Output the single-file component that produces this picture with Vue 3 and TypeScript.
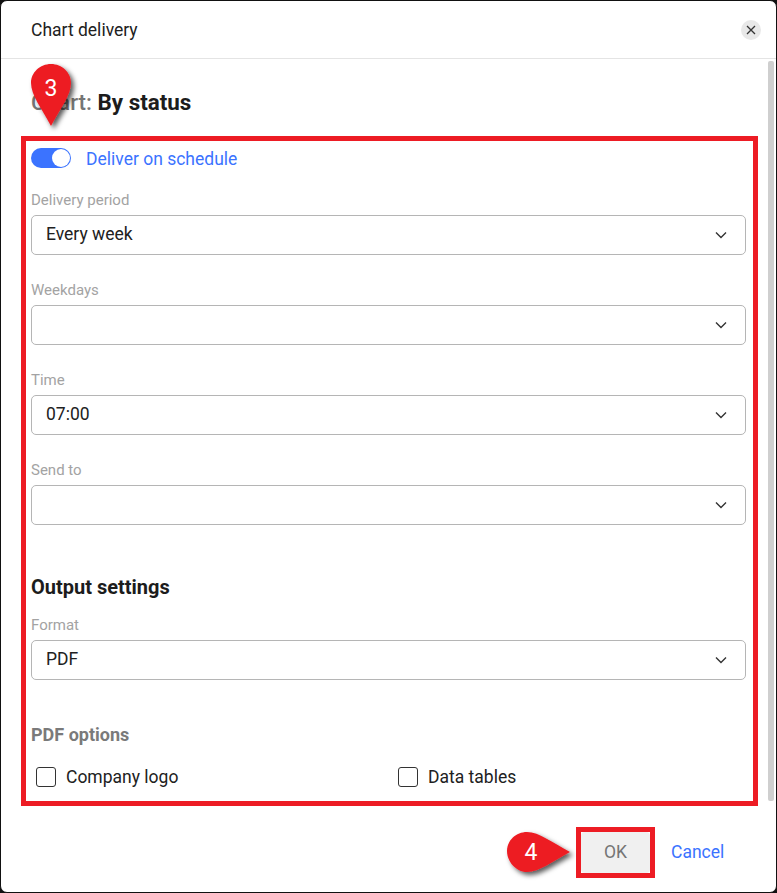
<script setup lang="ts">
  // チャート配信ダイアログ
  interface Field {
    label: string;
    value: string;
  }

  const scheduleFields: Field[] = [
    { label: 'Delivery period', value: 'Every week' },
    { label: 'Weekdays', value: '' },
    { label: 'Time', value: '07:00' },
    { label: 'Send to', value: '' },
  ];
</script>

<template>
  <div class="dialog">
    <header class="dialog-header">
      <span class="dialog-title">Chart delivery</span>
      <button class="close-button" aria-label="Close">
        <svg width="10" height="10" viewBox="0 0 10 10">
          <path d="M1 1 L9 9 M9 1 L1 9" stroke="#333" stroke-width="1.3" fill="none" />
        </svg>
      </button>
    </header>

    <div class="dialog-body">
      <div class="scroll-content">
        <h2 class="chart-name"><span class="chart-prefix">Chart:</span> By status</h2>

        <!-- 赤枠で囲まれたフォーム -->
        <section class="form-box">
          <div class="toggle-row">
            <span class="toggle"><span class="toggle-knob"></span></span>
            <span class="toggle-label">Deliver on schedule</span>
          </div>

          <div v-for="field in scheduleFields" :key="field.label" class="field">
            <label class="field-label">{{ field.label }}</label>
            <div class="select">
              <span>{{ field.value }}</span>
              <svg class="chevron" width="12" height="8" viewBox="0 0 12 8">
                <path d="M1 1.5 L6 6.5 L11 1.5" stroke="#333" stroke-width="1.4" fill="none" />
              </svg>
            </div>
          </div>

          <h3 class="section-title">Output settings</h3>

          <div class="field field-format">
            <label class="field-label">Format</label>
            <div class="select">
              <span>PDF</span>
              <svg class="chevron" width="12" height="8" viewBox="0 0 12 8">
                <path d="M1 1.5 L6 6.5 L11 1.5" stroke="#333" stroke-width="1.4" fill="none" />
              </svg>
            </div>
          </div>

          <h4 class="options-title">PDF options</h4>
          <div class="options">
            <label class="check"><span class="check-box"></span>Company logo</label>
            <label class="check"><span class="check-box"></span>Data tables</label>
          </div>
        </section>
      </div>
      <div class="scrollbar"></div>
    </div>

    <footer class="dialog-footer">
      <div class="ok-frame"><button class="ok-button">OK</button></div>
      <a class="cancel-link">Cancel</a>
    </footer>

    <!-- 注釈マーカー -->
    <svg class="pin pin-3" width="56" height="80" viewBox="0 0 56 80">
      <defs>
        <filter id="pinShadow" x="-30%" y="-30%" width="170%" height="170%">
          <feDropShadow dx="3" dy="3" stdDeviation="2.5" flood-color="#000" flood-opacity="0.65" />
        </filter>
      </defs>
      <path d="M21 2 C10 2 1 10.500 1 21 C1 33 12 47 21 64 C30 47 41 33 41 21 C41 10.500 32 2 21 2 Z" fill="#ed1c24" filter="url(#pinShadow)" />
      <text x="21" y="34" class="pin-number" text-anchor="middle">3</text>
    </svg>
    <svg class="pin pin-4" width="80" height="56" viewBox="0 0 80 56">
      <path d="M21 2 C10 2 1 10.500 1 21 C1 31.500 10 42 21 42 C33 42 47 31 64 22 C47 13 33 2 21 2 Z" fill="#ed1c24" filter="url(#pinShadow)" />
      <text x="25" y="30" class="pin-number" text-anchor="middle">4</text>
    </svg>
  </div>
</template>

<style>
body {
  background: #111;
}
</style>

<style scoped>
.dialog {
  position: relative;
  box-sizing: border-box;
  display: flex;
  flex-direction: column;
  width: 777px;
  height: 893px;
  background: #fff;
  border: 1px solid #111;
  border-radius: 7px;
  font-family: Roboto, "Liberation Sans", sans-serif;
  color: #212121;
  overflow: hidden;
}

.dialog-header {
  display: flex;
  align-items: center;
  justify-content: space-between;
  height: 57px;
  padding: 0 15px 0 30px;
  border-bottom: 1px solid #e4e4e4;
  flex-shrink: 0;
}

.dialog-title {
  font-size: 17.5px;
}

.close-button {
  display: flex;
  align-items: center;
  justify-content: center;
  width: 20px;
  height: 20px;
  padding: 0;
  border: none;
  border-radius: 50%;
  background: #e8e8e8;
}

.dialog-body {
  display: flex;
  flex: 1;
  min-height: 0;
}

.scroll-content {
  flex: 1;
  padding: 30px 10px 0 20px;
}

.chart-name {
  margin: 0 0 19px 10px;
  height: 28px;
  font-size: 22.4px;
  line-height: 26px;
  font-weight: 700;
  color: #1c1c1c;
}

.chart-prefix {
  color: #757575;
  font-weight: 500;
}

.form-box {
  box-sizing: border-box;
  height: 670px;
  border: 5px solid #ed1c24;
  padding: 7px 7px 0 5px;
}

.toggle-row {
  display: flex;
  align-items: center;
  gap: 15px;
  height: 20px;
}

.toggle {
  display: flex;
  justify-content: flex-end;
  align-items: center;
  box-sizing: border-box;
  width: 40px;
  height: 20px;
  padding: 1px;
  border-radius: 10px;
  background: #3b73ff;
}

.toggle-knob {
  width: 18px;
  height: 18px;
  border-radius: 50%;
  background: #fff;
}

.toggle-label {
  padding-top: 2px;
  font-size: 17.5px;
  color: #3b73ff;
}

.field {
  margin-top: 23px;
}

.field + .field {
  margin-top: 26px;
}

.field-label {
  display: block;
  height: 24px;
  font-size: 15px;
  line-height: 18px;
  color: #a3a3a3;
}

.select {
  box-sizing: border-box;
  display: flex;
  align-items: center;
  justify-content: space-between;
  height: 40px;
  padding: 0 18px 2px 14px;
  border: 1px solid #b5b5b5;
  border-radius: 5px;
  font-size: 17.5px;
  color: #212121;
}

.chevron {
  flex-shrink: 0;
  margin-top: 2px;
}

.section-title {
  margin: 49px 0 0;
  height: 26px;
  font-size: 20px;
  line-height: 26px;
  font-weight: 700;
  color: #1c1c1c;
}

.field-format {
  margin-top: 16px;
}

.options-title {
  margin: 44px 0 0;
  height: 22px;
  font-size: 18px;
  line-height: 22px;
  font-weight: 700;
  color: #7a7a7a;
}

.options {
  display: grid;
  grid-template-columns: 362px 1fr;
  margin-top: 21px;
  padding-left: 5px;
}

.check {
  display: flex;
  align-items: center;
  gap: 10px;
  height: 20px;
  font-size: 17.5px;
  color: #212121;
}

.check-box {
  box-sizing: border-box;
  width: 20px;
  height: 20px;
  border: 1px solid #333;
  border-radius: 3px;
}

.scrollbar {
  flex-shrink: 0;
  align-self: flex-start;
  width: 6px;
  height: 740px;
  margin: 2px 2px 0 0;
  border-radius: 2px;
  background: #cfcfcf;
}

.dialog-footer {
  box-sizing: border-box;
  display: flex;
  align-items: center;
  flex-shrink: 0;
  height: 86px;
  padding: 6px 0 0 575px;
}

.ok-frame {
  box-sizing: border-box;
  width: 79px;
  height: 51px;
  border: 5px solid #ed1c24;
}

.ok-button {
  display: block;
  width: 100%;
  height: 100%;
  border: none;
  border-radius: 4px;
  background: #f0f0f0;
  font-family: inherit;
  font-size: 17.5px;
  color: #757575;
}

.cancel-link {
  margin-left: 16px;
  font-size: 17.5px;
  color: #3b73ff;
}

.pin {
  position: absolute;
  overflow: visible;
}

.pin-3 {
  left: 29px;
  top: 61px;
}

.pin-4 {
  left: 505px;
  top: 829px;
}

.pin-number {
  font-family: Roboto, "Liberation Sans", sans-serif;
  font-size: 23px;
  fill: #fff;
}
</style>
